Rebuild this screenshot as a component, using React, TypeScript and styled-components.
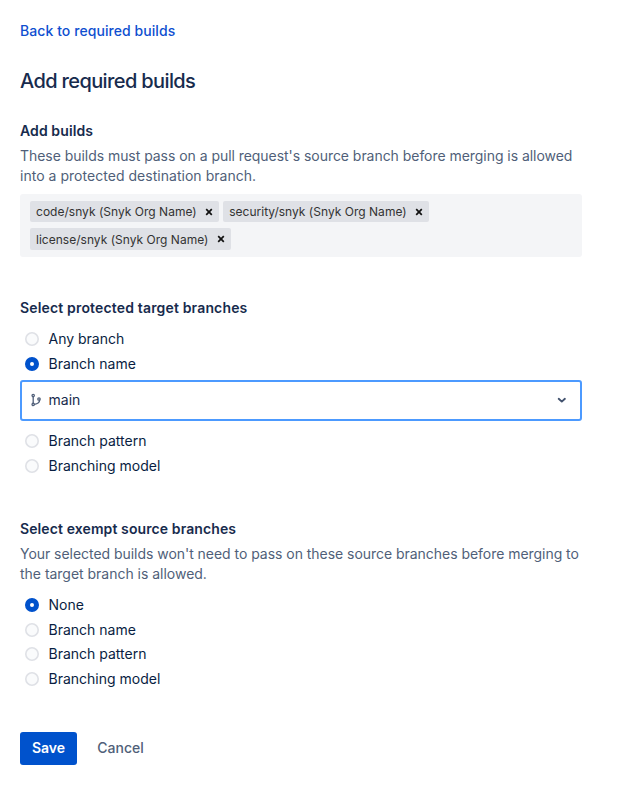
import React from 'react';
import styled, { createGlobalStyle } from 'styled-components';

const GlobalStyle = createGlobalStyle`
  * { box-sizing: border-box; }
  body {
    margin: 0;
    background: #fff;
    color: #172b4d;
    font: 400 14px/20px Inter, "Liberation Sans", sans-serif;
    -webkit-font-smoothing: antialiased;
  }
`;

const Page = styled.main`
  display: flex;
  flex-direction: column;
  width: 582px;
  padding: 21px 0 0 20px;
`;

const BackLink = styled.a`
  align-self: flex-start;
  color: #0f4fd0;
  font-weight: 500;
  letter-spacing: 0.07px;
  text-decoration: none;
`;

const Title = styled.h1`
  margin: 28px 0 0;
  font-size: 20px;
  line-height: 24px;
  font-weight: 500;
  letter-spacing: -0.62px;
`;

const Section = styled.section<{ $gap: number }>`
  margin-top: ${({ $gap }) => $gap}px;
`;

const SectionTitle = styled.h2<{ $spacing?: number }>`
  margin: 0;
  font-size: 14px;
  line-height: 20px;
  font-weight: 600;
  letter-spacing: ${({ $spacing = 0.1 }) => $spacing}px;
`;

const Description = styled.p<{ $top: number }>`
  margin: ${({ $top }) => $top}px 0 0;
  color: #505f79;
  line-height: 20.4px;
  white-space: nowrap;
`;

const DescriptionLine = styled.span<{ $spacing?: number }>`
  display: block;
  letter-spacing: ${({ $spacing = -0.045 }) => $spacing}px;
`;

const TagField = styled.div`
  display: flex;
  flex-wrap: wrap;
  align-content: flex-start;
  gap: 6px 4px;
  height: 63px;
  margin-top: 7px;
  padding: 7px 10px 0;
  border-radius: 3px;
  background: #f4f5f7;
`;

const Tag = styled.span`
  display: inline-flex;
  align-items: center;
  height: 21.5px;
  padding: 0 6px;
  border-radius: 2px;
  background: #dfe1e6;
  color: #333;
  font-size: 12px;
  line-height: 21px;
  letter-spacing: 0.02px;
`;

const RemoveButton = styled.button`
  display: flex;
  margin-left: 8.4px;
  padding: 0;
  border: 0;
  background: none;
`;

const Options = styled.div<{ $top: number }>`
  display: flex;
  flex-direction: column;
  margin-top: ${({ $top }) => $top}px;
`;

const Option = styled.label`
  display: flex;
  align-items: center;
  gap: 9.5px;
  height: 24.6px;
  padding-left: 5px;
  color: #091e42;
`;

const RadioInput = styled.input.attrs({ type: 'radio' })`
  position: absolute;
  opacity: 0;
  width: 14px;
  height: 14px;
  margin: 0;
`;

const RadioMark = styled.svg`
  flex: none;
  width: 14px;
  height: 14px;
  fill: #fafbfc;
  stroke: #dfe1e6;
  stroke-width: 1.6;

  circle + circle {
    display: none;
  }

  input:checked + & {
    fill: #0052cc;
    stroke: #0052cc;
  }

  input:checked + & circle + circle {
    display: block;
    fill: #fff;
    stroke: none;
  }
`;

const Select = styled.button`
  display: flex;
  align-items: center;
  width: 562px;
  height: 41px;
  margin: 4.2px 0 8px;
  padding: 0 13px 1px 8px;
  border: 2px solid #4c9aff;
  border-radius: 3px;
  background: #fff;
  color: #172b4d;
  font: inherit;
`;

const SelectValue = styled.span`
  flex: 1;
  margin-left: 6.5px;
  text-align: left;
`;

const Actions = styled.div`
  display: flex;
  margin-top: 40.7px;
`;

const Button = styled.button<{ $primary?: boolean }>`
  height: 33px;
  padding: 0 0 1px;
  width: ${({ $primary }) => ($primary ? 57 : 87)}px;
  border: 0;
  border-radius: 3px;
  background: ${({ $primary }) => ($primary ? '#0052cc' : 'transparent')};
  color: ${({ $primary }) => ($primary ? '#fff' : '#505f79')};
  font: inherit;
  font-weight: ${({ $primary }) => ($primary ? 600 : 500)};
`;

const CloseIcon = () => (
  <svg width="8" height="8" viewBox="0 0 8 8" fill="none" stroke="#111" strokeWidth="1.7">
    <path d="M1.2 1.2 6.8 6.8M6.8 1.2 1.2 6.8" />
  </svg>
);

const BranchIcon = () => (
  <svg width="12" height="14" viewBox="0 0 12 14" fill="none" stroke="#505f79" strokeWidth="1.3" strokeLinecap="round">
    <circle cx="3.2" cy="2.6" r="1.15" />
    <circle cx="3.2" cy="11.4" r="1.15" />
    <circle cx="9" cy="6" r="1.2" />
    <path d="M3.2 3.8v6.4M9.6 7.1c0 2.4-1.6 3.8-5.2 4.2" />
  </svg>
);

const ChevronIcon = () => (
  <svg width="10" height="8" viewBox="0 0 10 8" fill="none" stroke="#42526e" strokeWidth="1.9" strokeLinecap="round" strokeLinejoin="round">
    <path d="M1.7 2.8 4.8 5.6 7.9 2.8" />
  </svg>
);

const builds = ['code/snyk (Snyk Org Name)', 'security/snyk (Snyk Org Name)', 'license/snyk (Snyk Org Name)'];
const exemptOptions = ['None', 'Branch name', 'Branch pattern', 'Branching model'];

function RadioOption({ group, label, checked }: { group: string; label: string; checked?: boolean }) {
  return (
    <Option>
      <RadioInput name={group} defaultChecked={checked} />
      <RadioMark viewBox="0 0 14 14" aria-hidden="true">
        <circle cx="7" cy="7" r="6.2" />
        <circle cx="7" cy="7" r="2" />
      </RadioMark>
      {label}
    </Option>
  );
}

export default function App() {
  return (
    <>
      <GlobalStyle />
      <Page>
        <BackLink href="#">Back to required builds</BackLink>
        <Title>Add required builds</Title>

        <Section $gap={28}>
          <SectionTitle>Add builds</SectionTitle>
          <Description $top={5}>
            <DescriptionLine>These builds must pass on a pull request's source branch before merging is allowed</DescriptionLine>
            <DescriptionLine $spacing={0.03}>into a protected destination branch.</DescriptionLine>
          </Description>
          <TagField>
            {builds.map((build) => (
              <Tag key={build}>
                {build}
                <RemoveButton aria-label={`Remove ${build}`}>
                  <CloseIcon />
                </RemoveButton>
              </Tag>
            ))}
          </TagField>
        </Section>

        <Section $gap={41}>
          <SectionTitle $spacing={0.16}>Select protected target branches</SectionTitle>
          <Options $top={9}>
            <RadioOption group="target" label="Any branch" />
            <RadioOption group="target" label="Branch name" checked />
            <Select>
              <BranchIcon />
              <SelectValue>main</SelectValue>
              <ChevronIcon />
            </Select>
            <RadioOption group="target" label="Branch pattern" />
            <RadioOption group="target" label="Branching model" />
          </Options>
        </Section>

        <Section $gap={40.6}>
          <SectionTitle>Select exempt source branches</SectionTitle>
          <Description $top={5}>
            <DescriptionLine $spacing={-0.038}>Your selected builds won't need to pass on these source branches before merging to</DescriptionLine>
            <DescriptionLine $spacing={-0.02}>the target branch is allowed.</DescriptionLine>
          </Description>
          <Options $top={8}>
            {exemptOptions.map((label) => (
              <RadioOption key={label} group="exempt" label={label} checked={label === 'None'} />
            ))}
          </Options>
        </Section>

        <Actions>
          <Button $primary>Save</Button>
          <Button>Cancel</Button>
        </Actions>
      </Page>
    </>
  );
}
